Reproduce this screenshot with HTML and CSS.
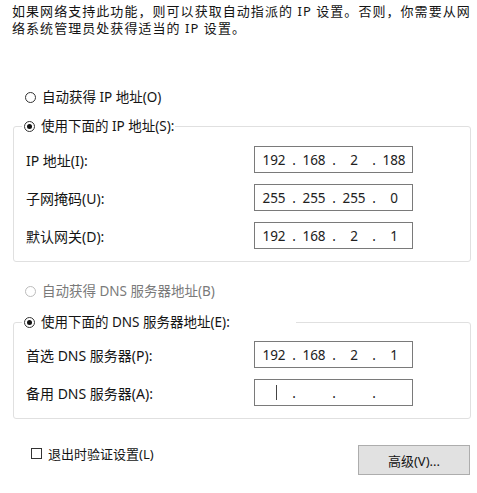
FILE: index.html
```html
<!DOCTYPE html>
<html lang="zh-CN">
<head>
<meta charset="utf-8">
<title>IP 设置</title>
<link rel="stylesheet" href="styles.css">
</head>
<body>
<div class="page">
  <p class="intro">如果网络支持此功能，则可以获取自动指派的 IP 设置。否则，你需要从网<br>络系统管理员处获得适当的 IP 设置。</p>

  <div class="radio radio-top"><span class="circle"></span><span>自动获得 IP 地址(O)</span></div>
  <fieldset class="group group-ip">
    <legend><span class="radio"><span class="circle on"></span><span>使用下面的 IP 地址(S):</span></span></legend>
    <div class="row">
      <span class="lbl">IP 地址(I):</span>
      <div class="ip"><span class="f">192</span><span class="d">.</span><span class="f">168</span><span class="d">.</span><span class="f">2</span><span class="d">.</span><span class="f">188</span></div>
    </div>
    <div class="row">
      <span class="lbl">子网掩码(U):</span>
      <div class="ip"><span class="f">255</span><span class="d">.</span><span class="f">255</span><span class="d">.</span><span class="f">255</span><span class="d">.</span><span class="f">0</span></div>
    </div>
    <div class="row">
      <span class="lbl">默认网关(D):</span>
      <div class="ip"><span class="f">192</span><span class="d">.</span><span class="f">168</span><span class="d">.</span><span class="f">2</span><span class="d">.</span><span class="f">1</span></div>
    </div>
  </fieldset>

  <div class="radio radio-dns disabled"><span class="circle"></span><span>自动获得 DNS 服务器地址(B)</span></div>
  <fieldset class="group group-dns">
    <legend class="wide"><span class="radio"><span class="circle on"></span><span>使用下面的 DNS 服务器地址(E):</span></span></legend>
    <div class="row">
      <span class="lbl">首选 DNS 服务器(P):</span>
      <div class="ip"><span class="f">192</span><span class="d">.</span><span class="f">168</span><span class="d">.</span><span class="f">2</span><span class="d">.</span><span class="f">1</span></div>
    </div>
    <div class="row">
      <span class="lbl">备用 DNS 服务器(A):</span>
      <div class="ip"><span class="f"><span class="caret"></span></span><span class="d">.</span><span class="f"></span><span class="d">.</span><span class="f"></span><span class="d">.</span><span class="f"></span></div>
    </div>
  </fieldset>

  <div class="footer">
    <div class="check"><span class="box"></span><span>退出时验证设置(L)</span></div>
    <div class="btn">高级(V)...</div>
  </div>
</div>
</body>
</html>
```

FILE: styles.css
```css
* { box-sizing: border-box; }
html, body { margin: 0; padding: 0; background: #ffffff; }
body {
  font-family: "Noto Sans", "Noto Sans CJK SC", sans-serif;
  font-size: 14px;
  color: #141414;
}
.page { width: 477px; }

.intro {
  margin: 0;
  padding: 3px 0 0 12px;
  font-size: 13px;
  line-height: 17px;
  letter-spacing: 1.05px;
  white-space: nowrap;
}

.radio {
  display: flex;
  align-items: center;
  height: 20px;
  line-height: 20px;
  gap: 6px;
  font-size: 13.5px;
  white-space: nowrap;
}
.radio-top { margin: 50px 0 0 25px; }
.radio-dns { margin: 19px 0 0 25px; }
.circle {
  width: 11px;
  height: 11px;
  border: 1px solid #333333;
  border-radius: 50%;
  display: flex;
  align-items: center;
  justify-content: center;
  flex: none;
}
.circle.on::after {
  content: "";
  width: 5px;
  height: 5px;
  border-radius: 50%;
  background: #111111;
}
.disabled { color: #7a7a7a; }
.disabled .circle { border-color: #bcbcbc; }

.group {
  margin: 9px 0 0 13px;
  width: 458px;
  border: 1px solid #e0e0e0;
  border-radius: 3px;
  padding: 10px 12px 12px 12px;
  min-width: 0;
}
.group-dns { margin-top: 11px; padding-top: 9px; }
.group legend {
  padding: 0 1px 0 2px;
  margin-left: -4px;
  height: 20px;
}
.group legend.wide { width: 274px; }

.row {
  display: grid;
  grid-template-columns: 228px 159px;
  align-items: center;
  height: 27px;
}
.row + .row { margin-top: 11px; }
.lbl { white-space: nowrap; }

.ip {
  display: flex;
  align-items: center;
  height: 27px;
  width: 159px;
  border: 1px solid #7a7a7a;
  padding-left: 2px;
  background: #ffffff;
  color: #222222;
  font-size: 13.5px;
}
.f {
  width: 34px;
  text-align: center;
  display: flex;
  justify-content: center;
  align-items: center;
}
.d {
  width: 6px;
  text-align: center;
}
.caret {
  display: inline-block;
  width: 1px;
  height: 15px;
  background: #444444;
  margin-left: 4px;
}

.footer {
  display: flex;
  justify-content: space-between;
  align-items: flex-start;
  margin-top: 24px;
  padding: 0 7px 0 31px;
  font-size: 13px;
}
.check {
  display: flex;
  align-items: center;
  gap: 6px;
  height: 20px;
}
.box {
  width: 11px;
  height: 11px;
  border: 1px solid #333333;
  flex: none;
}
.btn {
  margin-top: 2px;
  width: 112px;
  height: 30px;
  background: #e1e1e1;
  border: 1px solid #adadad;
  display: flex;
  align-items: center;
  justify-content: center;
}
```
